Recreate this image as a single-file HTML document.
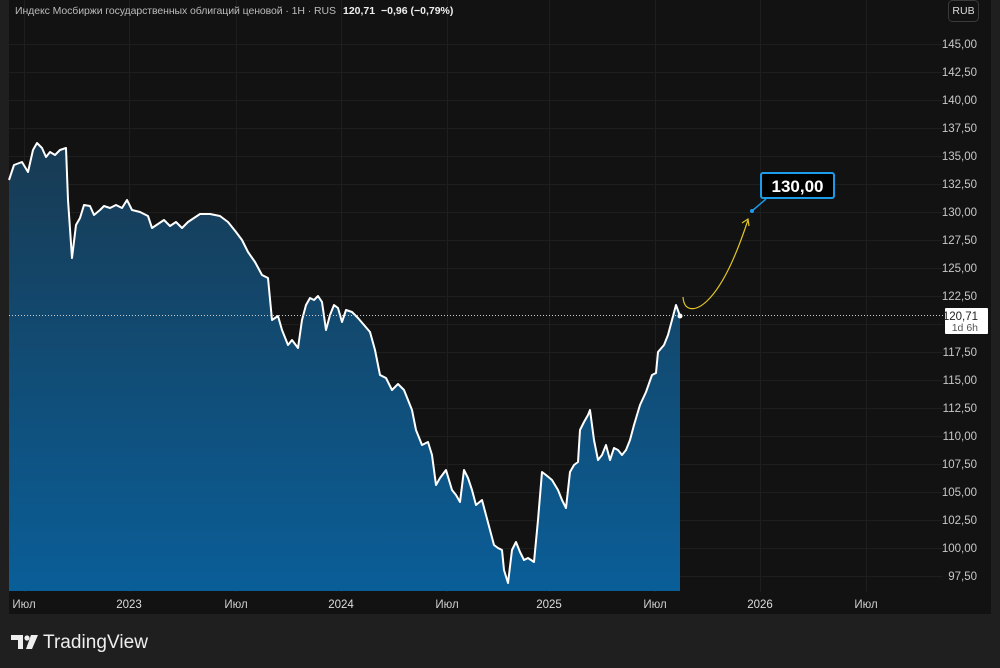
<!DOCTYPE html><html><head><meta charset="utf-8"><style>
body{margin:0;width:1000px;height:668px;background:#1f1f1f;overflow:hidden;font-family:"Liberation Sans","DejaVu Sans",sans-serif}
.panel{position:absolute;left:9px;top:0;width:982px;height:614px;background:#121212}
svg{position:absolute;left:0;top:0}
</style></head><body>
<div class="panel"></div>
<svg width="1000" height="668" font-family="Liberation Sans, DejaVu Sans, sans-serif">
<defs><linearGradient id="g" x1="0" y1="140" x2="0" y2="590" gradientUnits="userSpaceOnUse"><stop offset="0" stop-color="#183a52"/><stop offset="1" stop-color="#0a5e98"/></linearGradient></defs>
<g stroke="#1e1e1e" stroke-width="1">
<line x1="9" x2="943" y1="44.5" y2="44.5"/><line x1="9" x2="943" y1="72.5" y2="72.5"/><line x1="9" x2="943" y1="100.5" y2="100.5"/><line x1="9" x2="943" y1="128.5" y2="128.5"/><line x1="9" x2="943" y1="156.5" y2="156.5"/><line x1="9" x2="943" y1="184.5" y2="184.5"/><line x1="9" x2="943" y1="212.5" y2="212.5"/><line x1="9" x2="943" y1="240.5" y2="240.5"/><line x1="9" x2="943" y1="268.5" y2="268.5"/><line x1="9" x2="943" y1="296.5" y2="296.5"/><line x1="9" x2="943" y1="324.5" y2="324.5"/><line x1="9" x2="943" y1="352.5" y2="352.5"/><line x1="9" x2="943" y1="380.5" y2="380.5"/><line x1="9" x2="943" y1="408.5" y2="408.5"/><line x1="9" x2="943" y1="436.5" y2="436.5"/><line x1="9" x2="943" y1="464.5" y2="464.5"/><line x1="9" x2="943" y1="492.5" y2="492.5"/><line x1="9" x2="943" y1="520.5" y2="520.5"/><line x1="9" x2="943" y1="548.5" y2="548.5"/><line x1="9" x2="943" y1="576.5" y2="576.5"/>
<line x1="24.5" x2="24.5" y1="0" y2="592"/><line x1="129.5" x2="129.5" y1="0" y2="592"/><line x1="236.5" x2="236.5" y1="0" y2="592"/><line x1="341.5" x2="341.5" y1="0" y2="592"/><line x1="447.5" x2="447.5" y1="0" y2="592"/><line x1="549.5" x2="549.5" y1="0" y2="592"/><line x1="655.5" x2="655.5" y1="0" y2="592"/><line x1="760.5" x2="760.5" y1="0" y2="592"/><line x1="866.5" x2="866.5" y1="0" y2="592"/>
</g>
<path fill="url(#g)" d="M9,180 L14,165 L22,162 L28,172 L33,150 L37,143 L42,148 L46,157 L50,152 L55,155 L60,150 L66,148 L68,200 L72,258 L76,225 L80,218 L84,205 L90,206 L94,215 L100,210 L104,206 L110,208 L116,205 L122,208 L127,200 L132,210 L140,212 L148,216 L152,228 L158,224 L164,220 L170,226 L176,222 L182,228 L188,222 L194,218 L200,214 L210,214 L220,216 L228,222 L236,232 L242,240 L248,252 L255,262 L262,275 L268,278 L272,320 L278,316 L282,330 L288,345 L292,340 L298,348 L302,320 L306,305 L310,298 L314,300 L318,296 L322,302 L326,330 L330,315 L334,305 L338,308 L342,322 L346,310 L352,312 L358,318 L364,325 L370,332 L375,350 L380,375 L386,378 L392,390 L398,384 L404,390 L408,400 L412,410 L416,430 L422,445 L428,442 L432,455 L436,485 L440,478 L446,470 L452,490 L456,495 L460,502 L464,470 L468,478 L472,490 L476,505 L482,500 L486,515 L490,530 L494,545 L498,548 L502,550 L504,570 L508,583 L512,550 L516,542 L520,552 L524,560 L528,558 L534,562 L538,520 L542,472 L546,475 L552,480 L558,490 L562,500 L566,508 L570,472 L574,465 L578,462 L580,430 L584,422 L588,415 L590,410 L594,440 L598,460 L602,455 L606,445 L610,460 L614,448 L618,450 L622,455 L626,450 L630,440 L634,425 L640,405 L646,392 L652,375 L656,373 L658,352 L664,345 L668,335 L672,320 L676,305 L680,316 L680,591 L9,591 Z"/>
<path fill="none" stroke="#fff" stroke-width="2" stroke-linejoin="round" d="M9,180 L14,165 L22,162 L28,172 L33,150 L37,143 L42,148 L46,157 L50,152 L55,155 L60,150 L66,148 L68,200 L72,258 L76,225 L80,218 L84,205 L90,206 L94,215 L100,210 L104,206 L110,208 L116,205 L122,208 L127,200 L132,210 L140,212 L148,216 L152,228 L158,224 L164,220 L170,226 L176,222 L182,228 L188,222 L194,218 L200,214 L210,214 L220,216 L228,222 L236,232 L242,240 L248,252 L255,262 L262,275 L268,278 L272,320 L278,316 L282,330 L288,345 L292,340 L298,348 L302,320 L306,305 L310,298 L314,300 L318,296 L322,302 L326,330 L330,315 L334,305 L338,308 L342,322 L346,310 L352,312 L358,318 L364,325 L370,332 L375,350 L380,375 L386,378 L392,390 L398,384 L404,390 L408,400 L412,410 L416,430 L422,445 L428,442 L432,455 L436,485 L440,478 L446,470 L452,490 L456,495 L460,502 L464,470 L468,478 L472,490 L476,505 L482,500 L486,515 L490,530 L494,545 L498,548 L502,550 L504,570 L508,583 L512,550 L516,542 L520,552 L524,560 L528,558 L534,562 L538,520 L542,472 L546,475 L552,480 L558,490 L562,500 L566,508 L570,472 L574,465 L578,462 L580,430 L584,422 L588,415 L590,410 L594,440 L598,460 L602,455 L606,445 L610,460 L614,448 L618,450 L622,455 L626,450 L630,440 L634,425 L640,405 L646,392 L652,375 L656,373 L658,352 L664,345 L668,335 L672,320 L676,305 L680,316"/>
<line x1="9" x2="943" y1="315.5" y2="315.5" stroke="#ccc" stroke-width="1" stroke-dasharray="1,2"/>
<circle cx="680" cy="316" r="2.5" fill="#fff"/>
<path d="M683,297 C684,312 696,312 708,300 C725,283 738,250 748,220" fill="none" stroke="#e0c42a" stroke-width="1.2"/>
<path d="M742,223 L748,219 L749,226" fill="none" stroke="#e0c42a" stroke-width="1.2"/>
<circle cx="752" cy="211" r="2" fill="#1e9be8"/>
<path d="M752,211 L766,199" stroke="#1e9be8" stroke-width="1.5"/>
<rect x="761" y="173" width="73" height="25" rx="2" fill="#000" stroke="#1e9be8" stroke-width="2"/>
<text x="797.5" y="192" fill="#fff" font-size="17" font-weight="bold" text-anchor="middle">130,00</text>
<g fill="#c8c8c8" font-size="11.5" text-anchor="end">
<text x="977" y="48">145,00</text><text x="977" y="76">142,50</text><text x="977" y="104">140,00</text><text x="977" y="132">137,50</text><text x="977" y="160">135,00</text><text x="977" y="188">132,50</text><text x="977" y="216">130,00</text><text x="977" y="244">127,50</text><text x="977" y="272">125,00</text><text x="977" y="300">122,50</text><text x="977" y="356">117,50</text><text x="977" y="384">115,00</text><text x="977" y="412">112,50</text><text x="977" y="440">110,00</text><text x="977" y="468">107,50</text><text x="977" y="496">105,00</text><text x="977" y="524">102,50</text><text x="977" y="552">100,00</text><text x="977" y="580">97,50</text>
</g>
<rect x="945" y="308" width="43" height="26" fill="#fff" rx="1"/>
<text x="978" y="320" fill="#222" font-size="11.5" text-anchor="end">120,71</text>
<text x="978" y="331" fill="#555" font-size="10.5" text-anchor="end">1d 6h</text>
<rect x="948.5" y="0.5" width="30" height="21" rx="4" fill="#121212" stroke="#3a3a3a"/>
<text x="963.5" y="14" fill="#ddd" font-size="10.5" text-anchor="middle">RUB</text>
<text x="15" y="14" fill="#bbb" font-size="10.5" textLength="321">Индекс Мосбиржи государственных облигаций ценовой · 1H · RUS</text>
<text x="343" y="14" fill="#eee" font-size="10.5" font-weight="bold">120,71</text>
<text x="381" y="14" fill="#eee" font-size="10.5" font-weight="bold">−0,96 (−0,79%)</text>
<g fill="#ccc" font-size="11.5" text-anchor="middle">
<text x="24" y="608">Июл</text><text x="129" y="608" fill="#ddd">2023</text><text x="236" y="608">Июл</text><text x="341" y="608" fill="#ddd">2024</text><text x="447" y="608">Июл</text><text x="549" y="608" fill="#ddd">2025</text><text x="655" y="608">Июл</text><text x="760" y="608" fill="#ddd">2026</text><text x="866" y="608">Июл</text>
</g>
<g fill="#eee">
<path d="M11,635 H23 V649 H18 V640 H11 Z"/><circle cx="27" cy="638" r="2.6"/><path d="M31,635 H38 L32,649 H26 Z"/>
</g>
<text x="43" y="648" fill="#eee" font-size="19" textLength="105">TradingView</text>
</svg>
</body></html>
